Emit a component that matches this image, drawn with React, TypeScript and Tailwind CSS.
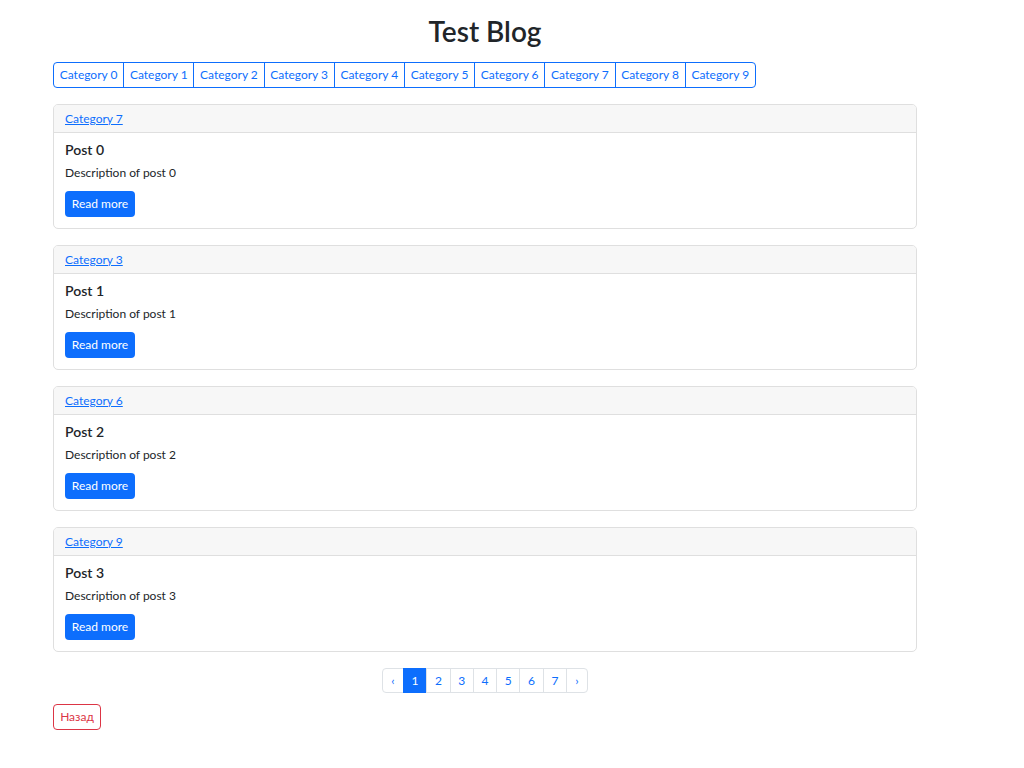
import React from 'react'

type Post = {
  title: string
  description: string
  category: string
}

const categories = Array.from({ length: 10 }, (_, i) => `Category ${i}`)

const posts: Post[] = [
  { title: 'Post 0', description: 'Description of post 0', category: 'Category 7' },
  { title: 'Post 1', description: 'Description of post 1', category: 'Category 3' },
  { title: 'Post 2', description: 'Description of post 2', category: 'Category 6' },
  { title: 'Post 3', description: 'Description of post 3', category: 'Category 9' },
]

const pages = ['1', '2', '3', '4', '5', '6', '7']

function PostCard({ post }: { post: Post }) {
  return (
    <div className="rounded-[5px] border border-[#dfdfdf] bg-white">
      <div className="flex h-[28px] items-center rounded-t-[4px] border-b border-[#dfdfdf] bg-[#f7f7f7] px-[11px]">
        <a href="#" className="text-[12px] leading-[18px] text-[#0d6efd] underline">
          {post.category}
        </a>
      </div>
      <div className="px-[11px] pt-[8px] pb-[11px]">
        <h5 className="text-[14px] leading-[18px] font-semibold text-[#212529]">{post.title}</h5>
        <p className="mt-[5px] text-[12px] leading-[18px] text-[#212529]">{post.description}</p>
        <button className="mt-[9px] h-[26px] w-[70px] rounded-[4px] bg-[#0d6efd] text-[12px] text-white">
          Read more
        </button>
      </div>
    </div>
  )
}

export default function App() {
  return (
    <div className="min-h-screen bg-white font-['Lato',sans-serif] text-[#212529]">
      <div className="ml-[53px] w-[864px]">
        <h1 className="pt-[14px] text-center text-[28px] leading-[34px] font-semibold">Test Blog</h1>

        {/* category filter */}
        <div className="mt-[14px] flex">
          {categories.map((c, i) => (
            <button
              key={c}
              className={`h-[26px] w-[71.2px] border border-[#0d6efd] text-[12px] text-[#0d6efd] ${
                i === 0 ? 'rounded-l-[4px]' : '-ml-px'
              } ${i === categories.length - 1 ? 'rounded-r-[4px]' : ''}`}
            >
              {c}
            </button>
          ))}
        </div>

        <div className="mt-[16px] flex flex-col gap-[16px]">
          {posts.map((p) => (
            <PostCard key={p.title} post={p} />
          ))}
        </div>

        {/* pagination */}
        <div className="mt-[16px] flex justify-center">
          <ul className="flex h-[25px]">
            <li className="flex w-[22px] items-center justify-center rounded-l-[4px] border border-[#dee2e6] text-[12px] text-[#0d6efd]">
              ‹
            </li>
            {pages.map((n, i) => (
              <li
                key={n}
                className={`-ml-px flex w-[24.3px] items-center justify-center border text-[12px] ${
                  i === 0
                    ? 'border-[#0d6efd] bg-[#0d6efd] text-white'
                    : 'border-[#dee2e6] text-[#0d6efd]'
                }`}
              >
                {n}
              </li>
            ))}
            <li className="-ml-px flex w-[22px] items-center justify-center rounded-r-[4px] border border-[#dee2e6] text-[12px] text-[#0d6efd]">
              ›
            </li>
          </ul>
        </div>

        <button className="mt-[11px] h-[26px] w-[48px] rounded-[4px] border border-[#dc3545] text-[12px] text-[#dc3545]">
          Назад
        </button>
      </div>
    </div>
  )
}
